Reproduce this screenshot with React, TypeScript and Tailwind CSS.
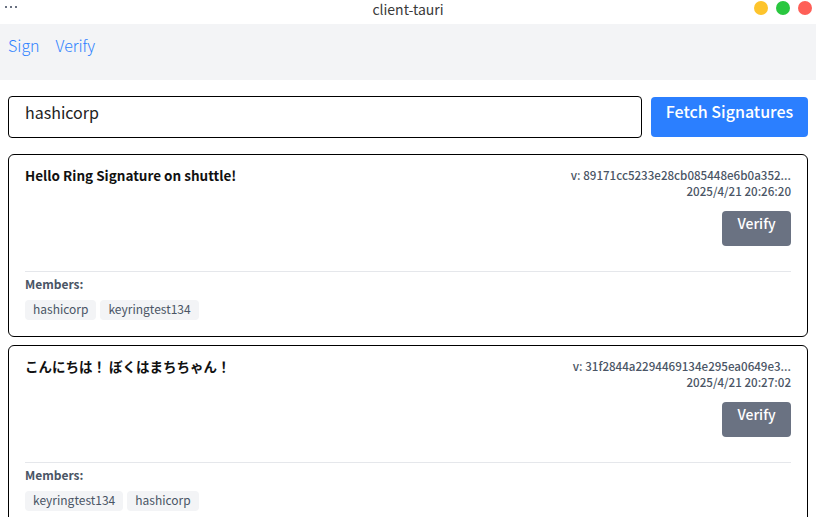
import React from "react";

const font = { fontFamily: '"Noto Sans CJK JP", "Noto Sans", sans-serif' };

type Sig = { title: string; hash: string; date: string; members: string[] };

const sigs: Sig[] = [
  {
    title: "Hello Ring Signature on shuttle!",
    hash: "v: 89171cc5233e28cb085448e6b0a352...",
    date: "2025/4/21 20:26:20",
    members: ["hashicorp", "keyringtest134"],
  },
  {
    title: "こんにちは！ ぼくはまちちゃん！",
    hash: "v: 31f2844a2294469134e295ea0649e3...",
    date: "2025/4/21 20:27:02",
    members: ["keyringtest134", "hashicorp"],
  },
];

function Card({ s }: { s: Sig }) {
  return (
    <div className="border border-black rounded-md px-4 pt-[9px] pb-4">
      <div className="flex justify-between items-start">
        <div className="text-[13.5px] leading-[22px] font-semibold text-[#111]">{s.title}</div>
        <div className="flex flex-col items-end">
          <div className="text-[11.6px] font-medium text-gray-600 leading-4 pt-[3px]">{s.hash}</div>
          <div className="text-[11.6px] font-medium text-gray-600 leading-4">{s.date}</div>
          <button className="mt-3 bg-gray-500 text-white rounded-[4px] w-[69px] h-[35px] text-sm font-medium pb-[12px] flex items-center justify-center">
            Verify
          </button>
        </div>
      </div>
      <div className="mt-[25px] border-t border-gray-200 pt-1">
        <div className="text-xs font-semibold text-gray-600 leading-4">Members:</div>
        <div className="flex gap-1 mt-2">
          {s.members.map((m) => (
            <span key={m} className="bg-gray-100 text-gray-600 text-xs leading-4 px-2 pt-[1px] pb-[3px] rounded-[4px]">
              {m}
            </span>
          ))}
        </div>
      </div>
    </div>
  );
}

export default function App() {
  return (
    <div className="w-[816px] h-[517px] overflow-hidden bg-white" style={font}>
      <div className="relative h-6 flex items-center justify-center">
        <div className="absolute left-[5px] top-[6px] flex gap-[3px]">
          <span className="w-[2px] h-[2px] bg-gray-500" />
          <span className="w-[2px] h-[2px] bg-gray-500" />
          <span className="w-[2px] h-[2px] bg-gray-500" />
        </div>
        <span className="text-[14px] text-[#3a3a3a] leading-5 -mt-[6px]">client-tauri</span>
        <div className="absolute right-[4px] top-[1px] flex gap-2">
          <span className="w-[14px] h-[14px] rounded-full bg-[#fdc42c]" />
          <span className="w-[14px] h-[14px] rounded-full bg-[#29c73f]" />
          <span className="w-[14px] h-[14px] rounded-full bg-[#fe5f57]" />
        </div>
      </div>
      <nav className="h-14 bg-gray-100 px-2 pt-[7px] flex items-start gap-4">
        <a className="text-blue-500 text-base font-light leading-7">Sign</a>
        <a className="text-blue-500 text-base font-light leading-7">Verify</a>
      </nav>
      <div className="px-2 pt-4">
        <div className="flex items-center gap-[9px]">
          <div className="flex-1 h-[42px] border border-black rounded-[4px] px-4 pt-[3px] text-base text-[#222]">
            hashicorp
          </div>
          <button className="w-[157px] h-10 bg-blue-500 text-white rounded-[4px] text-base font-medium pb-[12px] flex items-center justify-center">
            Fetch Signatures
          </button>
        </div>
        <div className="mt-4 flex flex-col gap-2">
          {sigs.map((s) => (
            <Card key={s.hash} s={s} />
          ))}
        </div>
      </div>
    </div>
  );
}
